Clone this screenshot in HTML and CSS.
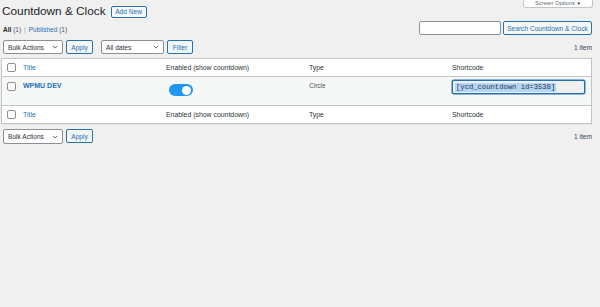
FILE: index.html
```html
<!DOCTYPE html>
<html lang="en">
<head>
<meta charset="utf-8">
<title>Countdown &amp; Clock</title>
<link rel="stylesheet" href="styles.css">
</head>
<body>
<div class="screen-options"><span class="so-label">Screen Options <span class="so-caret">▼</span></span></div>
<div class="wrap">
  <div class="heading">
    <h1>Countdown &amp; Clock</h1>
    <a class="add-new">Add New</a>
  </div>
  <div class="filters-row">
    <ul class="subsubsub">
      <li><a class="current">All <span class="count">(1)</span></a><span class="sep">|</span></li>
      <li><a class="link">Published <span class="count">(1)</span></a></li>
    </ul>
    <div class="search-box">
      <div class="search-input"></div>
      <a class="btn search-btn">Search Countdown &amp; Clock</a>
    </div>
  </div>
  <div class="tablenav">
    <div class="actions">
      <div class="group">
        <div class="select bulk"><span>Bulk Actions</span><svg class="chev" viewBox="0 0 8 5" width="6" height="4"><path d="M1 1l3 3 3-3" fill="none" stroke="#50575e" stroke-width="1.2"/></svg></div>
        <a class="btn apply">Apply</a>
      </div>
      <div class="group">
        <div class="select dates"><span>All dates</span><svg class="chev" viewBox="0 0 8 5" width="6" height="4"><path d="M1 1l3 3 3-3" fill="none" stroke="#50575e" stroke-width="1.2"/></svg></div>
        <a class="btn filter">Filter</a>
      </div>
    </div>
    <div class="items">1 item</div>
  </div>
  <table class="list">
    <colgroup><col class="c-cb"><col><col><col><col></colgroup>
    <thead>
      <tr>
        <th class="cb"><span class="checkbox"></span></th>
        <th><a class="link">Title</a></th>
        <th>Enabled (show countdown)</th>
        <th>Type</th>
        <th>Shortcode</th>
      </tr>
    </thead>
    <tbody>
      <tr>
        <td class="cb"><span class="checkbox"></span></td>
        <td><a class="link row-title">WPMU DEV</a></td>
        <td><span class="toggle"><span class="knob"></span></span></td>
        <td class="muted">Circle</td>
        <td><div class="shortcode"><span class="sel">[ycd_countdown id=3538]</span></div></td>
      </tr>
    </tbody>
    <tfoot>
      <tr>
        <th class="cb"><span class="checkbox"></span></th>
        <th><a class="link">Title</a></th>
        <th>Enabled (show countdown)</th>
        <th>Type</th>
        <th>Shortcode</th>
      </tr>
    </tfoot>
  </table>
  <div class="tablenav bottom">
    <div class="actions">
      <div class="group">
        <div class="select bulk"><span>Bulk Actions</span><svg class="chev" viewBox="0 0 8 5" width="6" height="4"><path d="M1 1l3 3 3-3" fill="none" stroke="#50575e" stroke-width="1.2"/></svg></div>
        <a class="btn apply">Apply</a>
      </div>
    </div>
    <div class="items">1 item</div>
  </div>
</div>
</body>
</html>
```
FILE: styles.css
```css
html, body {
  margin: 0;
  padding: 0;
}
body {
  background: #f0f0f1;
  font-family: "Liberation Sans", Arial, sans-serif;
  font-size: 7px;
  color: #3c434a;
  position: relative;
  min-height: 307px;
}
.screen-options {
  position: absolute;
  top: 0;
  right: 7px;
  width: 70px;
  height: 8px;
  box-sizing: border-box;
  background: #fff;
  border: 1px solid #c3c4c7;
  border-top: 0;
  border-radius: 0 0 3px 3px;
  overflow: hidden;
  text-align: center;
  font-size: 5.8px;
  color: #646970;
}
.so-label {
  display: block;
  line-height: 7px;
}
.so-caret {
  font-size: 4.5px;
  color: #3c434a;
}
.wrap {
  padding: 0 8px 0 1px;
}
.heading {
  display: flex;
  align-items: center;
  gap: 5px;
  padding-top: 4px;
  height: 15px;
}
h1 {
  margin: 0 0 0 1px;
  font-size: 11.8px;
  font-weight: 400;
  line-height: 15px;
  color: #1d2327;
}
.btn, .add-new {
  display: inline-flex;
  align-items: center;
  justify-content: center;
  box-sizing: border-box;
  border: 1px solid #2271b1;
  border-radius: 2px;
  background: #f6f7f7;
  color: #2271b1;
  font-size: 6.6px;
  white-space: nowrap;
}
.add-new {
  height: 12px;
  width: 36px;
}
.filters-row {
  display: flex;
  justify-content: space-between;
  align-items: flex-end;
  margin-top: 2px;
}
.subsubsub {
  list-style: none;
  margin: 0 0 0 2px;
  padding: 0;
  display: flex;
  font-size: 6.5px;
  line-height: 10px;
  color: #646970;
}
.subsubsub .current {
  color: #1d2327;
  font-weight: 700;
}
.subsubsub .current .count {
  font-weight: 400;
  color: #50575e;
}
.subsubsub .sep {
  margin: 0 3px;
  color: #a7aaad;
}
.link {
  color: #2271b1;
  text-decoration: none;
}
.count {
  color: #50575e;
}
.search-box {
  display: flex;
  gap: 2px;
}
.search-input {
  width: 82px;
  height: 14px;
  box-sizing: border-box;
  background: #fff;
  border: 1px solid #8c8f94;
  border-radius: 2px;
}
.search-btn {
  width: 89px;
  height: 14px;
}
.tablenav {
  display: flex;
  justify-content: space-between;
  align-items: center;
  margin-top: 5px;
  height: 14px;
  padding-left: 2px;
}
.tablenav.bottom {
  margin-top: 5px;
  height: 15px;
}
.actions {
  display: flex;
  gap: 8px;
}
.group {
  display: flex;
  gap: 3px;
}
.select {
  height: 14px;
  box-sizing: border-box;
  border: 1px solid #8c8f94;
  border-radius: 2px;
  background: #fff;
  display: flex;
  align-items: center;
  justify-content: space-between;
  padding: 0 4px 0 4px;
  color: #2c3338;
  font-size: 6.6px;
}
.bottom .select, .bottom .btn {
  height: 15px;
}
.select.bulk {
  width: 60px;
}
.select.dates {
  width: 63px;
}
.chev {
  display: block;
}
.btn.apply {
  width: 27px;
  height: 14px;
}
.btn.filter {
  width: 26px;
  height: 14px;
  background: #f0f6fc;
}
.items {
  color: #3c434a;
  font-size: 6.6px;
}
.list {
  margin-top: 4px;
  width: 591px;
  table-layout: fixed;
  border-collapse: separate;
  border-spacing: 0;
  background: #fff;
  border: 1px solid #c3c4c7;
  box-shadow: 0 1px 1px rgba(0,0,0,0.04);
}
.c-cb {
  width: 17px;
}
.list th {
  height: 17px;
  padding: 0 4px;
  text-align: left;
  font-weight: 400;
  font-size: 6.9px;
  color: #2c3338;
  vertical-align: middle;
}
.list thead th {
  border-bottom: 1px solid #c3c4c7;
}
.list tfoot th {
  border-top: 1px solid #c3c4c7;
}
.list td {
  height: 20px;
  padding: 4px 4px;
  vertical-align: top;
  background: #f6f7f7;
  line-height: 9px;
  font-size: 6.9px;
}
.list .cb {
  padding: 0 0 0 5px;
}
.list td.cb {
  padding-top: 5px;
}
.checkbox {
  display: block;
  width: 9px;
  height: 9px;
  box-sizing: border-box;
  border: 1px solid #8c8f94;
  border-radius: 2px;
  background: #fff;
}
.row-title {
  font-weight: 700;
  font-size: 7px;
}
.muted {
  color: #50575e;
  font-size: 6.5px !important;
}
.toggle {
  display: block;
  width: 24px;
  height: 12px;
  margin: 3px 0 0 3px;
  border-radius: 6px;
  background: #2196f3;
  position: relative;
}
.knob {
  position: absolute;
  right: 2px;
  top: 1.5px;
  width: 9px;
  height: 9px;
  border-radius: 50%;
  background: #fff;
}
.shortcode {
  width: 133px;
  height: 14px;
  box-sizing: border-box;
  margin-top: -1px;
  border: 1px solid #2271b1;
  box-shadow: 0 0 0 0.5px #2271b1;
  border-radius: 2px;
  background: #f0f0f1;
  display: flex;
  align-items: center;
  padding-left: 2px;
  font-family: "Liberation Mono", "DejaVu Sans Mono", monospace;
  font-size: 7.2px;
  color: #2c3338;
}
.sel {
  background: #b4d5fe;
  line-height: 9px;
  padding: 0 1px;
}
```
